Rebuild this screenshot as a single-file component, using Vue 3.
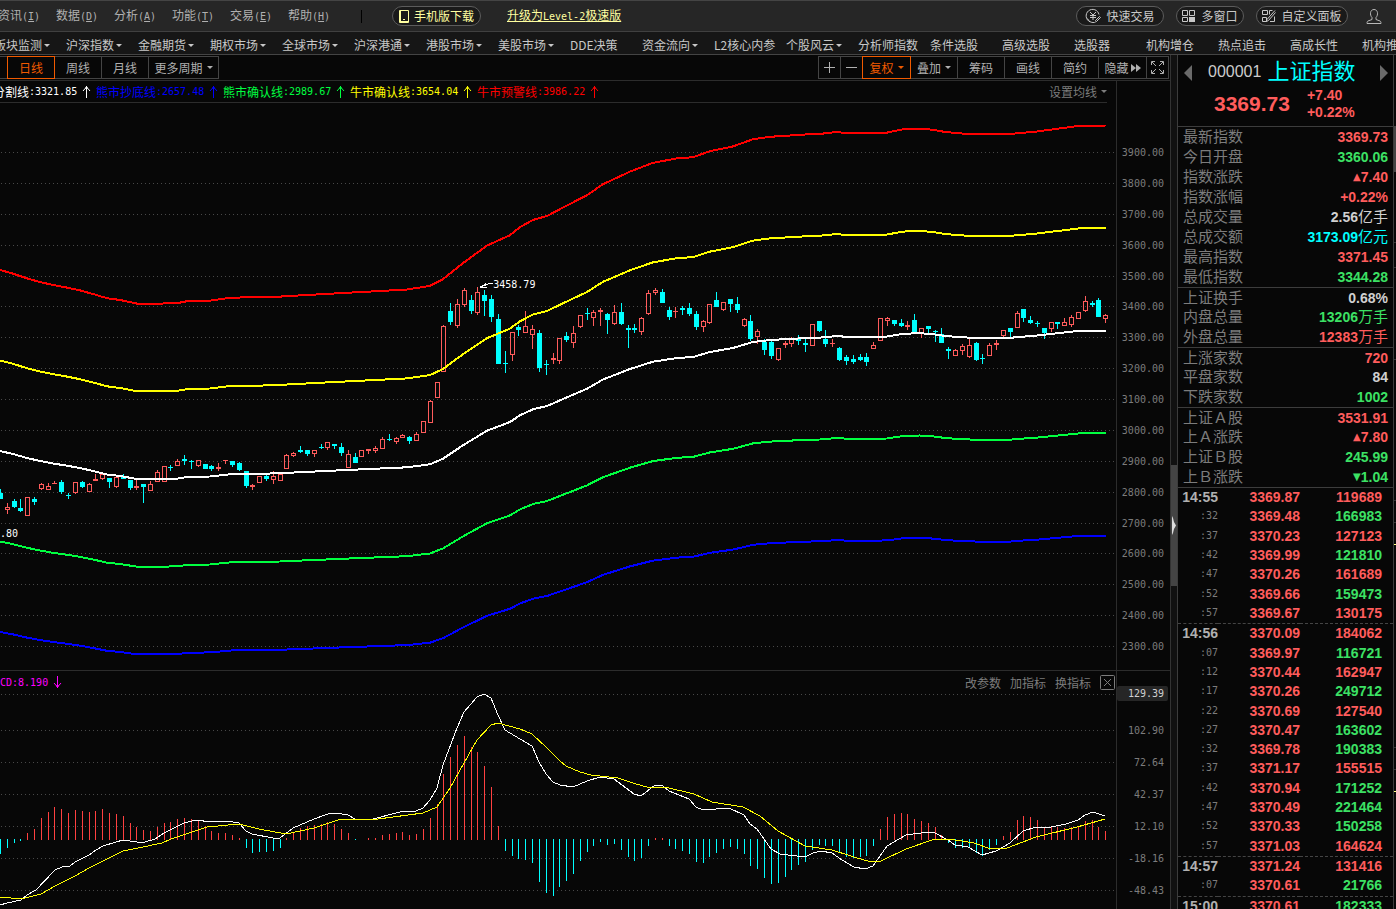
<script setup>
const menus = [
  ['资讯', 'I'], ['数据', 'D'], ['分析', 'A'], ['功能', 'T'], ['交易', 'E'], ['帮助', 'H'],
]

const navItems = [
  { t: '版块监测', c: true }, { t: '沪深指数', c: true }, { t: '金融期货', c: true },
  { t: '期权市场', c: true }, { t: '全球市场', c: true }, { t: '沪深港通', c: true },
  { t: '港股市场', c: true }, { t: '美股市场', c: true }, { t: 'DDE决策' },
  { t: '资金流向', c: true }, { t: 'L2核心内参' }, { t: '个股风云', c: true },
  { t: '分析师指数' }, { t: '条件选股' }, { t: '高级选股' }, { t: '选股器' },
  { t: '机构增仓' }, { t: '热点追击' }, { t: '高成长性' }, { t: '机构推荐' },
]

const legend = [
  { name: '牛熊分割线', value: '3321.85', cls: 'white' },
  { name: '熊市抄底线', value: '2657.48', cls: 'blue' },
  { name: '熊市确认线', value: '2989.67', cls: 'green' },
  { name: '牛市确认线', value: '3654.04', cls: 'yellow' },
  { name: '牛市预警线', value: '3986.22', cls: 'red' },
]

/* ---- price chart ---- */
const AXIS_TOP = 152
const PX_PER_POINT = 0.30875
const priceTicks = Array.from({ length: 17 }, (_, i) => 3900 - i * 100)
const yOf = (v) => AXIS_TOP + (3900 - v) * PX_PER_POINT
const valueOf = (y) => 3900 - (y - AXIS_TOP) / PX_PER_POINT
const xOf = (i) => Math.floor(7.2 + (i - 1) * 6.823)

const baseLine = [
  [0, 451], [13, 454], [27, 458], [40, 461], [53, 463.5], [66, 465.5], [80, 468], [93, 471],
  [107, 474.5], [120, 476], [137, 479], [160, 479], [178, 478.5], [187, 477], [210, 476.5],
  [232, 474], [260, 473.8], [280, 473.2], [300, 472.2], [347, 470], [407, 467.3], [430, 464.3],
  [443, 458.7], [463, 445.3], [487, 430.7], [510, 422], [520, 415.3], [533, 409.3], [547, 406],
  [567, 397.3], [587, 388.7], [603, 379.5], [630, 369], [653, 361.7], [677, 358], [693, 357],
  [710, 352], [733, 348], [753, 342], [770, 340], [807, 338], [820, 337.6], [835, 336.2],
  [847, 336.7], [870, 337], [887, 336.5], [903, 333.8], [920, 333.2], [933, 334.2], [943, 335.7],
  [957, 337], [977, 338], [1010, 338], [1017, 337], [1033, 336], [1060, 333], [1078, 331],
  [1106, 330.6],
]
const bands = [
  { k: 1.2, cls: 's-red' },
  { k: 1.1, cls: 's-yellow' },
  { k: 1, cls: 's-white' },
  { k: 0.9, cls: 's-green' },
  { k: 0.8, cls: 's-blue' },
].map((b) => ({
  ...b,
  points: baseLine.map(([x, y]) => `${x},${yOf(valueOf(y) * b.k).toFixed(1)}`).join(' '),
}))

/* direction, high, body top, body bottom, low */
const U = 1
const D = 0
const candles = [
  [D, 489, 493, 499, 499], [U, 503, 507, 510, 514], [D, 499, 501, 507, 508], [D, 499, 508, 511, 512],
  [U, 497, 497, 516, 516], [D, 497, 499, 502, 505], [U, 483, 484, 489, 490], [U, 483, 486, 490, 490],
  [U, 481, 483, 484, 484], [D, 480, 482, 492, 494], [D, 493, 495, 496, 499], [U, 482, 482, 493, 494],
  [D, 481, 482, 487, 488], [U, 483, 484, 492, 492], [U, 474, 479, 481, 481], [U, 474, 474, 479, 480],
  [D, 478, 478, 482, 488], [U, 477, 477, 487, 488], [D, 474, 476, 479, 479], [D, 480, 480, 488, 490],
  [U, 480, 486, 488, 490], [D, 484, 484, 487, 503], [U, 481, 484, 491, 491], [U, 470, 472, 482, 482],
  [U, 466, 466, 482, 482], [D, 465, 467, 468, 471], [U, 459, 461, 466, 466], [D, 455, 459, 461, 465],
  [D, 460, 461, 462, 469], [U, 460, 460, 466, 467], [D, 464, 464, 469, 469], [D, 465, 466, 469, 471],
  [U, 463, 467, 469, 471], [U, 460, 460, 461, 464], [D, 461, 461, 465, 467], [D, 462, 463, 470, 471],
  [D, 471, 471, 486, 488], [U, 484, 485, 487, 490], [U, 476, 476, 483, 483], [D, 475, 476, 479, 481],
  [U, 471, 476, 480, 484], [U, 474, 474, 481, 481], [U, 454, 455, 469, 469], [U, 452, 453, 456, 457],
  [D, 446, 450, 452, 453], [D, 450, 450, 454, 456], [U, 450, 450, 454, 457], [D, 444, 447, 448, 449],
  [U, 442, 442, 448, 450], [D, 444, 444, 446, 449], [D, 443, 447, 453, 456], [U, 450, 454, 468, 468],
  [D, 453, 457, 463, 463], [U, 450, 450, 457, 457], [U, 449, 449, 451, 454], [U, 446, 448, 451, 453],
  [U, 437, 439, 449, 449], [D, 434, 439, 440, 441], [U, 437, 438, 442, 444], [U, 434, 435, 438, 438],
  [D, 436, 437, 441, 444], [U, 432, 434, 441, 441], [U, 421, 421, 433, 433], [U, 400, 401, 423, 423],
  [U, 382, 382, 398, 398], [U, 325, 326, 372, 372], [D, 303, 311, 322, 325], [U, 299, 304, 326, 328],
  [U, 288, 290, 305, 307], [D, 295, 300, 311, 314], [U, 287, 292, 313, 315], [D, 290, 295, 301, 316],
  [D, 295, 299, 317, 322], [D, 314, 319, 364, 364], [D, 351, 363, 364, 373], [U, 332, 332, 355, 361],
  [D, 325, 327, 330, 336], [U, 311, 326, 333, 333], [U, 325, 329, 335, 349], [D, 330, 333, 368, 372],
  [D, 360, 364, 365, 375], [U, 353, 358, 360, 364], [U, 338, 338, 361, 364], [D, 332, 336, 340, 342],
  [U, 326, 333, 343, 348], [U, 315, 315, 327, 328], [D, 308, 313, 314, 320], [U, 310, 312, 318, 326],
  [U, 308, 310, 312, 326], [D, 313, 314, 320, 334], [U, 305, 312, 324, 325], [D, 303, 312, 324, 325],
  [D, 325, 328, 330, 348], [D, 324, 328, 330, 333], [U, 317, 318, 332, 335], [U, 290, 293, 314, 315],
  [U, 288, 290, 293, 295], [D, 289, 292, 303, 303], [D, 307, 310, 317, 320], [U, 307, 311, 312, 318],
  [D, 306, 308, 310, 315], [D, 303, 308, 314, 316], [D, 311, 314, 327, 330], [U, 320, 321, 327, 332],
  [U, 304, 304, 323, 324], [D, 292, 300, 307, 307], [U, 302, 302, 310, 311], [D, 299, 299, 304, 312],
  [D, 297, 304, 310, 313], [U, 318, 319, 326, 327], [D, 315, 321, 339, 341], [U, 329, 331, 337, 344],
  [D, 339, 342, 350, 355], [D, 341, 342, 356, 359], [U, 348, 348, 360, 361], [U, 341, 343, 345, 348],
  [U, 337, 339, 344, 347], [D, 335, 339, 341, 345], [D, 339, 343, 345, 352], [U, 324, 324, 346, 346],
  [D, 321, 321, 331, 332], [D, 330, 339, 344, 347], [U, 339, 343, 344, 347], [D, 347, 348, 360, 361],
  [D, 355, 357, 361, 365], [D, 355, 359, 362, 364], [D, 354, 357, 360, 361], [D, 353, 357, 362, 366],
  [U, 342, 345, 349, 349], [U, 318, 318, 341, 341], [U, 317, 318, 321, 326], [D, 320, 320, 324, 326],
  [D, 319, 323, 326, 327], [U, 321, 325, 327, 330], [D, 314, 320, 332, 334], [U, 328, 328, 334, 338],
  [D, 326, 326, 329, 333], [D, 330, 331, 332, 342], [D, 328, 334, 343, 343], [D, 347, 349, 351, 359],
  [U, 349, 350, 356, 356], [U, 344, 346, 351, 355], [U, 339, 345, 357, 358], [D, 342, 343, 360, 361],
  [D, 354, 358, 359, 364], [U, 343, 345, 356, 356], [U, 340, 343, 345, 350], [U, 330, 330, 336, 337],
  [D, 328, 328, 332, 337], [U, 311, 313, 328, 328], [D, 309, 309, 318, 322], [D, 316, 320, 323, 324],
  [D, 321, 323, 324, 327], [D, 328, 328, 333, 339], [U, 322, 322, 329, 332], [D, 322, 322, 324, 329],
  [U, 318, 322, 326, 326], [U, 315, 317, 325, 327], [U, 312, 312, 319, 319], [U, 296, 301, 311, 312],
  [D, 301, 303, 305, 307], [D, 298, 300, 317, 317], [U, 314, 315, 319, 323],
]

/* ---- MACD chart ---- */
const ZERO = 839
const macdLabels = ['102.90', '72.64', '42.37', '12.10', '-18.16', '-48.43']
const macdGrid = [694, 730, 762, 794, 826, 858, 890]
const macdBars = [
  854, 848, 843, 841, 833, 829, 818, 812, 807, 809, 813, 810, 811, 812, 811, 809, 813, 814, 816, 823,
  827, 830, 831, 827, 823, 822, 819, 818, 819, 821, 826, 831, 833, 833, 835, 838, 848, 853, 852, 852,
  851, 848, 838, 832, 828, 826, 825, 824, 822, 824, 829, 833, 840, 839, 838, 838, 835, 834, 833, 832,
  835, 834, 829, 818, 804, 774, 757, 745, 736, 747, 752, 766, 787, 826, 851, 856, 859, 860, 863, 882,
  893, 896, 887, 881, 874, 861, 852, 846, 842, 845, 844, 850, 857, 861, 858, 846, 838, 838, 846, 849,
  851, 854, 862, 863, 857, 853, 849, 847, 849, 854, 866, 869, 878, 884, 883, 877, 870, 865, 862, 850,
  845, 846, 846, 853, 857, 858, 857, 856, 846, 829, 817, 814, 813, 814, 819, 821, 823, 827, 835, 843,
  848, 848, 848, 853, 856, 850, 845, 836, 832, 820, 816, 817, 820, 827, 826, 827, 828, 827, 826, 821,
  820, 827, 831,
]
const dif =
  '0,905 7,903 21,900 27,895 36,890 55,870 62,867 70,866 75,862 89,855 96,850 103,846 116,842 123,840 137,842 145,842 155,839 164,833 184,823 196,820 211,822 227,821 239,823 246,831 252,834 273,838 280,838 293,828 314,819 328,814 336,813 348,815 355,819 373,819 400,812 416,811 423,808 430,800 437,788 443,765 457,728 464,712 477,697 484,694 491,698 498,715 505,730 520,739 532,746 539,762 546,774 553,782 560,785 573,787 587,781 600,777 614,779 634,794 641,796 655,785 663,786 669,791 689,799 696,807 703,810 729,808 744,815 750,824 757,829 771,849 780,854 805,857 813,853 821,851 832,853 842,860 854,867 865,869 873,866 887,846 906,835 928,832 935,833 948,840 955,845 968,847 982,855 996,851 1010,843 1023,831 1036,827 1046,828 1066,824 1078,820 1085,815 1093,812 1105,816'
const dea =
  '0,897 21,899 41,894 55,886 75,876 89,868 123,851 143,847 162,843 171,839 207,827 239,824 259,829 286,834 314,828 341,819 378,819 423,813 437,807 450,788 464,763 477,740 491,725 498,723 520,729 532,734 546,747 560,761 566,766 580,772 591,775 618,778 636,784 647,787 665,787 694,794 712,802 743,807 760,816 778,831 805,846 832,850 854,857 871,862 881,861 906,849 935,839 949,839 974,843 988,848 1007,848 1036,837 1077,827 1105,819'

/* ---- quote panel ---- */
const quoteGroups = [
  [
    ['最新指数', '', '3369.73', '', 'up'], ['今日开盘', '', '3360.06', '', 'down'],
    ['指数涨跌', '▲', '7.40', '', 'up'], ['指数涨幅', '', '+0.22%', '', 'up'],
    ['总成交量', '', '2.56', '亿手', 'flat'], ['总成交额', '', '3173.09', '亿元', 'cyan'],
    ['最高指数', '', '3371.45', '', 'up'], ['最低指数', '', '3344.28', '', 'down'],
  ],
  [
    ['上证换手', '', '0.68%', '', 'flat'], ['内盘总量', '', '13206', '万手', 'down'],
    ['外盘总量', '', '12383', '万手', 'up'],
  ],
  [
    ['上涨家数', '', '720', '', 'up'], ['平盘家数', '', '84', '', 'flat'],
    ['下跌家数', '', '1002', '', 'down'],
  ],
  [
    ['上证Ａ股', '', '3531.91', '', 'up'], ['上Ａ涨跌', '▲', '7.80', '', 'up'],
    ['上证Ｂ股', '', '245.99', '', 'down'], ['上Ｂ涨跌', '▼', '1.04', '', 'down'],
  ],
]

const trades = [
  ['14:55', '3369.87', '119689', 'up'], [':32', '3369.48', '166983', 'down'],
  [':37', '3370.23', '127123', 'up'], [':42', '3369.99', '121810', 'down'],
  [':47', '3370.26', '161689', 'up'], [':52', '3369.66', '159473', 'down'],
  [':57', '3369.67', '130175', 'up'], ['14:56', '3370.09', '184062', 'up'],
  [':07', '3369.97', '116721', 'down'], [':12', '3370.44', '162947', 'up'],
  [':17', '3370.26', '249712', 'down'], [':22', '3370.69', '127540', 'up'],
  [':27', '3370.47', '163602', 'down'], [':32', '3369.78', '190383', 'down'],
  [':37', '3371.17', '155515', 'up'], [':42', '3370.94', '171252', 'down'],
  [':47', '3370.49', '221464', 'down'], [':52', '3370.33', '150258', 'down'],
  [':57', '3371.03', '164624', 'up'], ['14:57', '3371.24', '131416', 'up'],
  [':07', '3370.61', '21766', 'down'], ['15:00', '3370.61', '182333', 'down'],
]
</script>

<template>
  <div class="app">
    <header class="menubar">
      <nav class="menus">
        <button v-for="m in menus" :key="m[1]" type="button" class="menu">{{ m[0] }}<span class="num">(<u>{{ m[1] }}</u>)</span></button>
      </nav>
      <span class="divider"></span>
      <button type="button" class="pill phone">
        <svg width="10" height="13" viewBox="0 0 10 13" fill="none" stroke="currentColor"><path d="M.5 .5h9v12h-9zM1.500 1v11M1 11.500h8" /><path d="M4 9.500h2" /></svg>
        手机版下载
      </button>
      <a href="#level2" class="upgrade">升级为<span class="num">Level-2</span>极速版</a>
      <div class="tools">
        <button type="button" class="pill trade">
          <svg width="16" height="16" viewBox="0 0 16 16" fill="none" stroke="currentColor">
            <path d="M5 13.800A6.500 6.500 0 1 1 14 6.500M2.500 10.500A6.500 6.500 0 0 0 9 14.500" />
            <path d="M5 4l3 3 3-3M8 7v5M5 7.500h6M5 9.500h6" />
            <path d="M14.500 8.500l-4 4 1 1 4-4zM10.500 13.500l-1 1.500" />
          </svg>
          快速交易
        </button>
        <button type="button" class="pill multi">
          <svg width="14" height="14" viewBox="0 0 14 14" fill="none" stroke="currentColor">
            <path d="M.5 1.500h5v5h-5zM7.500 1.500h5v5h-5zM.5 8.500h5v4h-5z" />
            <path d="M7 8h6v5H7z" fill="currentColor" stroke="none" />
          </svg>
          多窗口
        </button>
        <button type="button" class="pill custom">
          <svg width="14" height="14" viewBox="0 0 14 14" fill="none" stroke="currentColor">
            <path d="M.5 1.500h5v4h-5zM.5 8.500h4v4h-4zM7.500 5.500v-4h3M8 12.500h4.500v-5" />
            <path d="M13 1.500l-8 9-.5 2 2-1 7-8" />
          </svg>
          自定义面板
        </button>
        <button type="button" class="user" aria-label="用户">
          <svg width="16" height="17" viewBox="0 0 16 17" fill="none" stroke="currentColor">
            <path d="M6 9.500C3.500 7 4 1.500 8 1.500s4.500 5.500 2 8v2l4 1.500c1 .5 1 1.500 1 2.500H1c0-1 0-2 1-2.500l4-1.500z" />
          </svg>
        </button>
      </div>
    </header>

    <nav class="navbar">
      <a v-for="n in navItems" :key="n.t" href="#nav" class="nav-item">{{ n.t }}<i v-if="n.c" class="caret"></i></a>
    </nav>

    <div class="workspace">
      <main class="chart-pane">
        <div class="toolbar">
          <div class="btns periods">
            <button type="button" class="tb first" aria-label="分时"></button>
            <button type="button" class="tb w48 active">日线</button>
            <button type="button" class="tb w48">周线</button>
            <button type="button" class="tb w48">月线</button>
            <button type="button" class="tb w71">更多周期<i class="caret wide"></i></button>
          </div>
          <div class="btns">
            <button type="button" class="tb w23" aria-label="放大"><svg width="11" height="11" viewBox="0 0 11 11"><path d="M5.500 0v11M0 5.500h11" stroke="currentColor" /></svg></button>
            <button type="button" class="tb w23" aria-label="缩小"><svg width="11" height="11" viewBox="0 0 11 11"><path d="M0 5.500h11" stroke="currentColor" /></svg></button>
            <button type="button" class="tb w49 active">复权<i class="caret wide"></i></button>
            <button type="button" class="tb w48">叠加<i class="caret wide"></i></button>
            <button type="button" class="tb w48">筹码</button>
            <button type="button" class="tb w48">画线</button>
            <button type="button" class="tb w48">简约</button>
            <button type="button" class="tb w49">隐藏<svg class="ff" width="10" height="8" viewBox="0 0 10 8"><path d="M0 0l5 4-5 4zM5 0l5 4-5 4z" fill="currentColor" /></svg></button>
            <button type="button" class="tb w23" aria-label="全屏">
              <svg width="13" height="13" viewBox="0 0 13 13" fill="none" stroke="currentColor">
                <path d="M.5 4v-3.500h3.500M9 .5h3.500v3.500M.5 9v3.500h3.500M9 12.500h3.500v-3.500M1 1l4 4M12 1L8 5M1 12l4-4M12 12L8 8" />
              </svg>
            </button>
          </div>
        </div>

        <div class="charts">
          <section class="price">
            <div class="legend">
              <div class="legend-items">
                <span v-for="l in legend" :key="l.name" class="legend-item" :class="l.cls">
                  {{ l.name }}<span class="num">:{{ l.value }}</span>
                  <svg width="9" height="13" viewBox="0 0 9 13"><path d="M4.500 1v12M1 6l3.500-4L8 6M3 3h3" fill="none" stroke="currentColor" /></svg>
                </span>
              </div>
              <button type="button" class="ma">设置均线<i class="caret wide"></i></button>
            </div>
            <div class="plot">
              <svg class="canvas" viewBox="0 103 1116 567" preserveAspectRatio="none">
                <line v-for="t in priceTicks" :key="t" class="grid" x1="1" x2="1116" :y1="Math.round(yOf(t)) + 0.5" :y2="Math.round(yOf(t)) + 0.5" />
                <g v-for="(c, i) in candles" :key="i" :class="c[0] ? 'c-up' : 'c-down'">
                  <rect :x="xOf(i)" :y="c[1]" width="1" :height="c[2] - c[1]" />
                  <rect :x="xOf(i)" :y="c[3]" width="1" :height="c[4] - c[3]" />
                  <rect v-if="c[0] === 0 || c[3] - c[2] < 3" :x="xOf(i) - 2" :y="c[2]" width="5" :height="c[3] - c[2]" />
                  <rect v-else class="hollow" :x="xOf(i) - 1.5" :y="c[2] + 0.5" width="4" :height="c[3] - c[2] - 1" />
                </g>
                <polyline v-for="b in bands" :key="b.k" class="band" :class="b.cls" :points="b.points" />
                <path class="pointer" d="M492.500 283.500h-3l-8 3M486.500 283.500l-6 3.500 6 1" />
              </svg>
              <span class="mark high num">3458.79</span>
              <span class="mark low num">.80</span>
            </div>
          </section>
          <aside class="axis price-axis">
            <span v-for="t in priceTicks" :key="t" class="num">{{ t.toFixed(2) }}</span>
          </aside>

          <section class="macd">
            <svg class="canvas" viewBox="0 671 1116 238" preserveAspectRatio="none">
              <line v-for="y in macdGrid" :key="y" class="grid" x1="1" x2="1116" :y1="y + 0.5" :y2="y + 0.5" />
              <rect
                v-for="(y, i) in macdBars" :key="i" :class="y < ZERO ? 'b-up' : 'b-down'"
                :x="xOf(i)" width="1" :y="Math.min(y, ZERO)" :height="Math.abs(y - ZERO) + (y < ZERO ? 1 : 0)"
              />
              <polyline class="thin s-white" :points="dif" />
              <polyline class="thin s-yellow" :points="dea" />
            </svg>
            <div class="macd-head">
              <span class="macd-value"><span class="num">CD:8.190</span>
                <svg width="9" height="13" viewBox="0 0 9 13"><path d="M4.500 0v12M1 7l3.500 4L8 7M3 10h3" fill="none" stroke="currentColor" /></svg>
              </span>
              <div class="macd-actions">
                <button type="button">改参数</button>
                <button type="button">加指标</button>
                <button type="button">换指标</button>
                <button type="button" class="close" aria-label="关闭">
                  <svg width="15" height="15" viewBox="0 0 15 15" fill="none" stroke="currentColor"><rect x=".5" y=".5" width="14" height="14" rx="1" /><path d="M4 4l7 7M11 4l-7 7" /></svg>
                </button>
              </div>
            </div>
          </section>
          <aside class="axis macd-axis">
            <span class="tag num">129.39</span>
            <div class="macd-labels"><span v-for="l in macdLabels" :key="l" class="num">{{ l }}</span></div>
          </aside>
        </div>
      </main>

      <div class="splitter">
        <button type="button" class="handle" aria-label="收起">
          <svg width="4" height="19" viewBox="0 0 4 19"><path d="M0 0l1 2 1 4 2 3.500-2 3.500-1 4-1 2z" fill="currentColor" /></svg>
        </button>
      </div>

      <aside class="quote">
        <div class="quote-head">
          <button type="button" class="arrow" aria-label="上一个"><svg width="8" height="16" viewBox="0 0 8 16"><path d="M8 0v16L0 8z" fill="currentColor" /></svg></button>
          <div class="title">
            <div class="name-row"><span class="code">000001</span><span class="name">上证指数</span></div>
            <div class="price-row"><span class="last">3369.73</span><span class="chg"><span>+7.40</span><span>+0.22%</span></span></div>
          </div>
          <button type="button" class="arrow" aria-label="下一个"><svg width="8" height="16" viewBox="0 0 8 16"><path d="M0 0v16l8-8z" fill="currentColor" /></svg></button>
        </div>

        <dl v-for="(g, gi) in quoteGroups" :key="gi" class="group" :class="{ lead: gi === 0 }">
          <div v-for="r in g" :key="r[0]" class="row">
            <dt>{{ r[0] }}</dt>
            <dd :class="r[4]"><span v-if="r[1]" class="tri">{{ r[1] }}</span>{{ r[2] }}<span v-if="r[3]" class="unit">{{ r[3] }}</span></dd>
          </div>
        </dl>

        <div class="trades">
          <table>
            <tbody>
              <tr v-for="(t, i) in trades" :key="i" :class="{ minute: t[0].length > 3 && i > 0 }">
                <td :class="t[0].length > 3 ? 'time' : 'sec num'">{{ t[0] }}</td>
                <td class="up">{{ t[1] }}</td>
                <td :class="t[3]">{{ t[2] }}</td>
              </tr>
            </tbody>
          </table>
        </div>
      </aside>

      <svg class="edge" viewBox="0 55 2 854" preserveAspectRatio="none">
        <rect x="0" y="126" width="2" height="46" fill="#444" />
        <path d="M0 242.500h2M0 267.500h2M0 359.500h2M0 500.500h2M0 522.500h2M0 747.500h2M0 769.500h2" stroke="#333" />
        <path d="M0 544.500h2M0 791.500h2" stroke="#ffff80" />
      </svg>
    </div>
  </div>
</template>

<style>
html,
body {
  background: #070707;
  overflow: hidden;
}
</style>

<style scoped>
.app {
  display: flex;
  flex-direction: column;
  height: 100vh;
  overflow: hidden;
  background: #070707;
  color: #b8b8b8;
  font: 12px/16px "Noto Sans CJK SC", sans-serif;
}
.app * {
  box-sizing: border-box;
}
button {
  margin: 0;
  padding: 0;
  border: 0;
  background: none;
  color: inherit;
  font: inherit;
  white-space: nowrap;
}
a {
  color: inherit;
  text-decoration: none;
}
svg {
  display: block;
  flex: none;
}
.num {
  font-family: "DejaVu Sans Mono", monospace;
  font-size: 10px;
}
.caret {
  display: inline-block;
  flex: none;
  margin-left: 2px;
  border: 3px solid transparent;
  border-top-color: currentColor;
  border-bottom: 0;
}
.caret.wide {
  margin-left: 4px;
}

/* menu bar */
.menubar {
  display: flex;
  flex: none;
  align-items: center;
  height: 32px;
  border-top: 1px solid #444;
  border-bottom: 1px solid #404040;
  background: #262626;
}
.menus {
  display: flex;
  gap: 16px;
  margin-left: -2px;
}
.menu {
  width: 42px;
  text-align: left;
  color: #b0b0b0;
}
.divider {
  width: 1px;
  height: 13px;
  margin: 0 30px 0 31px;
  background: #000;
}
.pill {
  display: flex;
  align-items: center;
  justify-content: center;
  gap: 5px;
  height: 20px;
  border: 1px solid #5c5c5c;
  border-radius: 10px;
  background: #1a1a1a;
  color: #c8c8c8;
}
.phone {
  width: 89px;
  color: #ffffa0;
}
.upgrade {
  margin-left: 26px;
  color: #ffffa0;
  text-decoration: underline;
  white-space: nowrap;
}
.tools {
  display: flex;
  align-items: center;
  gap: 12px;
  margin-left: auto;
  padding-right: 14px;
}
.trade {
  width: 88px;
}
.multi {
  width: 68px;
}
.custom {
  width: 92px;
}
.user {
  width: 16px;
  margin-left: 6px;
}

/* module navigation */
.navbar {
  display: flex;
  flex: none;
  height: 23px;
  padding-top: 5px;
  margin-left: -6px;
  border-bottom: 1px solid #444;
  background: #161616;
  color: #c8c8c8;
  overflow: hidden;
}
.nav-item {
  display: flex;
  flex: none;
  align-items: center;
  width: 72px;
  height: 16px;
  white-space: nowrap;
}

.workspace {
  display: flex;
  flex: 1;
  min-height: 0;
}
.chart-pane {
  display: flex;
  flex: 1;
  flex-direction: column;
  min-width: 0;
}
.toolbar {
  display: flex;
  flex: none;
  justify-content: space-between;
  height: 26px;
  padding: 1px 1px 2px 0;
  border-bottom: 1px solid #2c2c2c;
  color: #b0b0b0;
}
.btns {
  display: flex;
}
.tb {
  display: flex;
  align-items: center;
  justify-content: center;
  height: 23px;
  margin-right: -1px;
  border: 1px solid #444;
}
.btns:last-child .tb:last-child {
  margin-right: 0;
}
.tb.active {
  z-index: 1;
  border-color: #f05a00;
  color: #f05a00;
}
.first {
  width: 8px;
  border-left: 0;
}
.w23 {
  width: 23px;
}
.w48 {
  width: 48px;
}
.w49 {
  width: 49px;
}
.w71 {
  width: 71px;
}
.ff {
  margin-left: 2px;
}

.charts {
  display: grid;
  flex: 1;
  grid-template-columns: 1fr 54px;
  grid-template-rows: 590fr 238fr;
  min-height: 0;
}
.price {
  display: flex;
  flex-direction: column;
  min-width: 0;
  border-bottom: 1px solid #2c2c2c;
}
.legend {
  display: flex;
  flex: none;
  align-items: center;
  justify-content: space-between;
  height: 22px;
  margin-right: 9px;
  border-bottom: 1px solid #2c2c2c;
  overflow: hidden;
}
.legend-items {
  display: flex;
  margin-left: -31px;
}
.legend-item {
  display: flex;
  align-items: center;
  width: 127px;
  white-space: nowrap;
}
.legend-item svg {
  margin-left: 5px;
}
.white {
  color: #fff;
}
.blue {
  color: #00f;
}
.green {
  color: #00ff40;
}
.yellow {
  color: #ff0;
}
.red {
  color: #f00;
}
.ma {
  display: flex;
  align-items: center;
  color: #7c7c7c;
}
.plot {
  position: relative;
  flex: 1;
}
.canvas {
  position: absolute;
  inset: 0;
  width: 100%;
  height: 100%;
  shape-rendering: crispEdges;
}
.grid {
  stroke: #484848;
  stroke-dasharray: 1 3;
}
.c-up {
  fill: #ff5c5c;
}
.c-down {
  fill: #0ff;
}
.hollow {
  fill: none;
  stroke: #ff5c5c;
}
.band {
  fill: none;
  stroke-width: 2;
}
.thin {
  fill: none;
  stroke-width: 1;
}
.s-red {
  stroke: #f00;
}
.s-yellow {
  stroke: #ff0;
}
.s-white {
  stroke: #fff;
}
.s-green {
  stroke: #00ff40;
}
.s-blue {
  stroke: #00f;
}
.pointer {
  fill: none;
  stroke: #fff;
}
.mark {
  position: absolute;
  color: #fff;
  line-height: 12px;
}
.high {
  top: 31%;
  left: 44.2%;
}
.low {
  top: 75%;
  left: 0;
}
.b-up {
  fill: #ff4040;
}
.b-down {
  fill: #0ff;
}

.axis {
  display: flex;
  flex-direction: column;
  border-left: 1px solid #2c2c2c;
  color: #7c7c7c;
  text-align: right;
  line-height: 12px;
}
.axis > span,
.macd-labels > span {
  padding-right: 6px;
}
.price-axis {
  justify-content: space-between;
  padding: 66px 0 17px;
  border-bottom: 1px solid #2c2c2c;
}
.macd {
  position: relative;
  min-width: 0;
}
.macd-axis {
  padding: 15px 0 12px;
}
.axis > .tag {
  flex: none;
  height: 15px;
  margin-right: 2px;
  padding-right: 4px;
  border-radius: 2px;
  background: #262626;
  color: #d0d0d0;
  line-height: 15px;
}
.macd-labels {
  display: flex;
  flex: 1;
  flex-direction: column;
  justify-content: space-between;
  margin-top: 24px;
}
.macd-head {
  position: relative;
  display: flex;
  align-items: center;
  justify-content: space-between;
  height: 23px;
  padding-right: 1px;
}
.macd-value {
  display: flex;
  align-items: center;
  gap: 5px;
  color: #f0f;
}
.macd-actions {
  display: flex;
  align-items: center;
  gap: 9px;
  color: #7c7c7c;
}

.splitter {
  display: flex;
  flex: none;
  flex-direction: column;
  width: 7px;
  border-left: 1px solid #333;
  background: #111;
}
.splitter::before {
  content: "";
  flex: 410;
}
.splitter::after {
  content: "";
  flex: 323;
}
.handle {
  display: flex;
  align-items: center;
  height: 121px;
  padding-left: 1px;
  background: #444;
  color: #ddd;
}

/* quote panel */
.quote {
  display: flex;
  flex: none;
  flex-direction: column;
  width: 217px;
  border: solid #3c3c3c;
  border-width: 0 1px;
  font-family: "Liberation Sans", "Noto Sans CJK SC", sans-serif;
}
.quote-head {
  display: flex;
  flex: none;
  justify-content: space-between;
  height: 71px;
  padding: 4px 5px 0 6px;
}
.arrow {
  height: 27px;
  color: #6a6a6a;
}
.title {
  width: 156px;
  padding-top: 1px;
}
.name-row {
  display: flex;
  align-items: center;
  height: 24px;
  gap: 6px;
}
.code {
  color: #ccc;
  font-size: 16px;
}
.name {
  color: #0ff;
  font-size: 22px;
}
.price-row {
  display: flex;
  align-items: center;
  gap: 17px;
  height: 40px;
  padding-left: 6px;
  color: #ff5c5c;
  font-weight: bold;
}
.last {
  font-size: 21px;
}
.chg {
  display: flex;
  flex-direction: column;
  font-size: 14px;
  line-height: 17px;
}
.group {
  flex: none;
  margin: 0;
  padding: 0 5px;
  border-top: 1px solid #3c3c3c;
}
.row {
  display: flex;
  align-items: center;
  justify-content: space-between;
  height: 20px;
}
.group:not(.lead) .row:first-child {
  height: 19px;
}
dt {
  color: #7c7c7c;
  font-size: 15px;
}
dd {
  display: flex;
  align-items: center;
  margin: 0;
  font-size: 14px;
  font-weight: bold;
}
.unit {
  font-size: 15px;
  font-weight: normal;
}
.tri {
  font-family: "DejaVu Sans", sans-serif;
  font-size: 10px;
}
.up {
  color: #ff5c5c;
}
.down {
  color: #3ce164;
}
.flat {
  color: #d0d0d0;
}
.cyan {
  color: #0ff;
}
.trades {
  flex: 1;
  min-height: 0;
  overflow: hidden;
  border-top: 1px solid #3c3c3c;
}
table {
  width: 100%;
  height: 428px;
  table-layout: fixed;
  border-collapse: collapse;
}
td {
  padding: 0 0 1px;
  font-size: 14px;
  font-weight: bold;
  text-align: right;
}
td:first-child {
  width: 40px;
}
td:nth-child(2) {
  width: 82px;
}
td:last-child {
  padding-right: 11px;
}
td.time {
  color: #b0b0b0;
}
td.sec {
  color: #7c7c7c;
  font-size: 10px;
  font-weight: normal;
}
.minute td {
  border-top: 1px dashed #444;
}
.edge {
  width: 2px;
  height: 100%;
}
</style>
